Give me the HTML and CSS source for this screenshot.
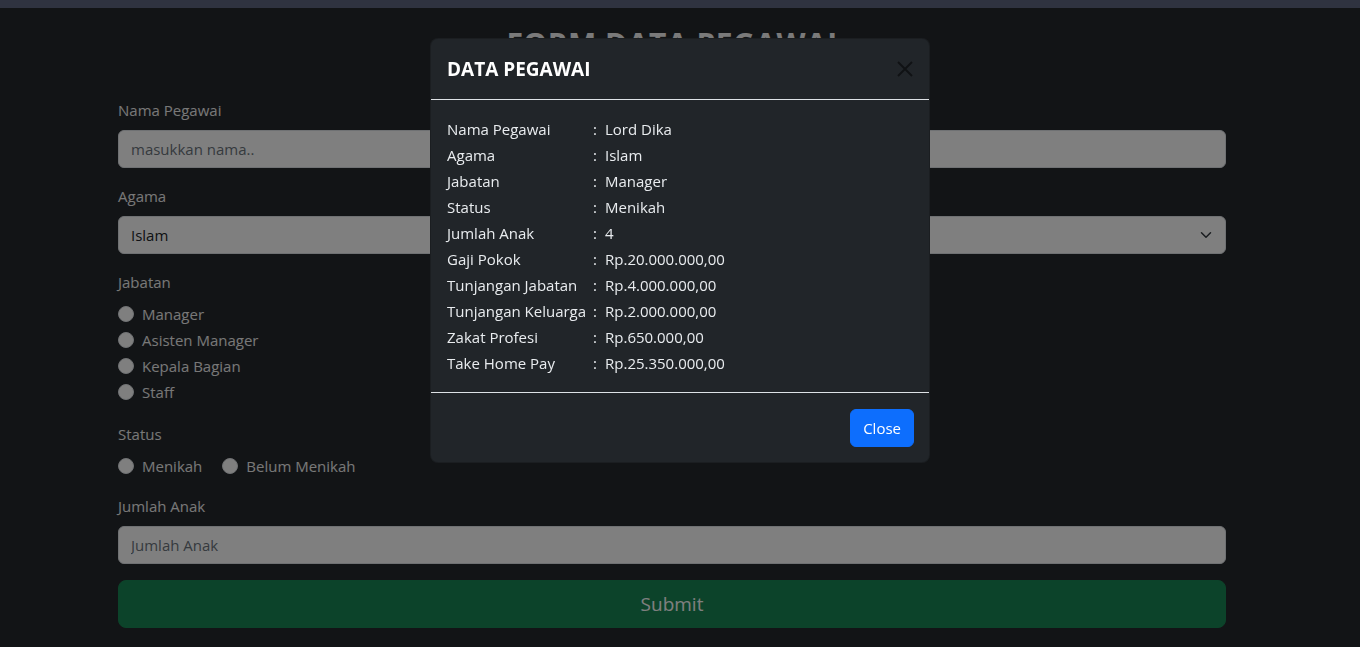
FILE: index.html
```html
<!DOCTYPE html>
<html lang="id">
<head>
<meta charset="utf-8">
<title>Form Data Pegawai</title>
<link rel="stylesheet" href="styles.css">
</head>
<body>
<div class="topbar"></div>
<main class="container">
  <h2 class="page-title">FORM DATA PEGAWAI</h2>
  <form class="form">
    <div class="field">
      <label class="form-label">Nama Pegawai</label>
      <input class="form-control" type="text" placeholder="masukkan nama..">
    </div>
    <div class="field">
      <label class="form-label">Agama</label>
      <div class="select-wrap">
        <div class="form-select">Islam</div>
        <svg class="chevron" width="16" height="12" viewBox="0 0 16 16"><path d="m2 5 6 6 6-6" fill="none" stroke="#343a40" stroke-width="2" stroke-linecap="round" stroke-linejoin="round"/></svg>
      </div>
    </div>
    <div class="field">
      <label class="form-label">Jabatan</label>
      <div class="form-check"><span class="radio"></span><span class="check-label">Manager</span></div>
      <div class="form-check"><span class="radio"></span><span class="check-label">Asisten Manager</span></div>
      <div class="form-check"><span class="radio"></span><span class="check-label">Kepala Bagian</span></div>
      <div class="form-check"><span class="radio"></span><span class="check-label">Staff</span></div>
    </div>
    <div class="field">
      <label class="form-label">Status</label>
      <div class="inline-checks">
        <div class="form-check inline"><span class="radio"></span><span class="check-label">Menikah</span></div>
        <div class="form-check inline"><span class="radio"></span><span class="check-label">Belum Menikah</span></div>
      </div>
    </div>
    <div class="field">
      <label class="form-label">Jumlah Anak</label>
      <input class="form-control" type="text" placeholder="Jumlah Anak">
    </div>
    <button class="btn-submit" type="button">Submit</button>
  </form>
</main>

<div class="backdrop"></div>

<div class="modal">
  <div class="modal-header">
    <h5 class="modal-title">DATA PEGAWAI</h5>
    <svg class="btn-close" width="16" height="16" viewBox="0 0 16 16"><path d="M1 1 15 15M15 1 1 15" stroke="#000" stroke-width="2"/></svg>
  </div>
  <div class="modal-body">
    <div class="row"><span class="key">Nama Pegawai</span><span class="val"><span class="colon">:</span>Lord Dika</span></div>
    <div class="row"><span class="key">Agama</span><span class="val"><span class="colon">:</span>Islam</span></div>
    <div class="row"><span class="key">Jabatan</span><span class="val"><span class="colon">:</span>Manager</span></div>
    <div class="row"><span class="key">Status</span><span class="val"><span class="colon">:</span>Menikah</span></div>
    <div class="row"><span class="key">Jumlah Anak</span><span class="val"><span class="colon">:</span>4</span></div>
    <div class="row"><span class="key">Gaji Pokok</span><span class="val"><span class="colon">:</span>Rp.20.000.000,00</span></div>
    <div class="row"><span class="key">Tunjangan Jabatan</span><span class="val"><span class="colon">:</span>Rp.4.000.000,00</span></div>
    <div class="row"><span class="key">Tunjangan Keluarga</span><span class="val"><span class="colon">:</span>Rp.2.000.000,00</span></div>
    <div class="row"><span class="key">Zakat Profesi</span><span class="val"><span class="colon">:</span>Rp.650.000,00</span></div>
    <div class="row"><span class="key">Take Home Pay</span><span class="val"><span class="colon">:</span>Rp.25.350.000,00</span></div>
  </div>
  <div class="modal-footer">
    <button class="btn-close-primary" type="button">Close</button>
  </div>
</div>
</body>
</html>
```

FILE: styles.css
```css
* { box-sizing: border-box; }

html, body { height: 100%; }

body {
  margin: 0;
  padding-right: 16px;
  background: #25282c;
  color: #fff;
  font-family: "Open Sans", "Noto Sans", "Liberation Sans", sans-serif;
  font-size: 15px;
  line-height: 24px;
  overflow: hidden;
}

.topbar {
  height: 8px;
  margin-right: -16px;
  background: #5e6680;
}

.container {
  width: 1108px;
  margin: 0 auto;
}

.page-title {
  margin: 17px 0 22px;
  text-align: center;
  font-size: 30px;
  line-height: 38px;
  font-weight: 700;
  color: #f4f4f4;
  letter-spacing: 0.5px;
}

.form {
  display: flex;
  flex-direction: column;
  gap: 16px;
  margin-top: 35px;
}

.field {
  display: flex;
  flex-direction: column;
}

.form-label {
  display: block;
  margin-bottom: 8px;
  color: #f0f0f0;
}

.form-control,
.form-select {
  display: block;
  width: 100%;
  height: 38px;
  padding: 6px 12px;
  font: inherit;
  color: #212529;
  background: #fff;
  border: 1px solid #dee2e6;
  border-radius: 6px;
  outline: none;
}

.form-control::placeholder { color: #6c757d; }

.select-wrap { position: relative; }

.chevron {
  position: absolute;
  right: 12px;
  top: 13px;
}

.form-check {
  display: flex;
  align-items: center;
  gap: 8px;
  min-height: 24px;
  margin-bottom: 2px;
  color: #f0f0f0;
}

.inline-checks {
  display: flex;
  gap: 20px;
}

.inline-checks .form-check { margin-bottom: 0; }

.radio {
  width: 16px;
  height: 16px;
  border-radius: 50%;
  background: #fff;
  border: 1px solid #dee2e6;
  flex: none;
}

.btn-submit {
  width: 100%;
  height: 48px;
  font: inherit;
  font-size: 19px;
  color: #fff;
  background: #198754;
  border: 1px solid #198754;
  border-radius: 8px;
}

.backdrop {
  position: fixed;
  inset: 0;
  background: rgba(0, 0, 0, 0.5);
}

.modal {
  position: fixed;
  top: 38px;
  left: 430px;
  width: 500px;
  background: #212529;
  border: 1px solid rgba(0, 0, 0, 0.175);
  border-radius: 8px;
  color: #e9ecef;
}

.modal-header {
  display: flex;
  align-items: center;
  justify-content: space-between;
  padding: 15px 16px;
  border-bottom: 1px solid #dee2e6;
}

.modal-title {
  margin: 0;
  font-size: 19px;
  line-height: 30px;
  font-weight: 700;
  color: #fff;
}

.btn-close {
  opacity: 0.5;
}

.modal-body {
  padding: 16px;
}

.row {
  display: flex;
  height: 26px;
  align-items: center;
  white-space: nowrap;
}

.key {
  width: 146px;
  flex: none;
}

.colon {
  display: inline-block;
  width: 12px;
}

.modal-footer {
  display: flex;
  justify-content: flex-end;
  padding: 16px 15px 15px;
  border-top: 1px solid #dee2e6;
}

.btn-close-primary {
  height: 38px;
  padding: 6px 12px;
  font: inherit;
  color: #fff;
  background: #0d6efd;
  border: 1px solid #0d6efd;
  border-radius: 6px;
}
```
